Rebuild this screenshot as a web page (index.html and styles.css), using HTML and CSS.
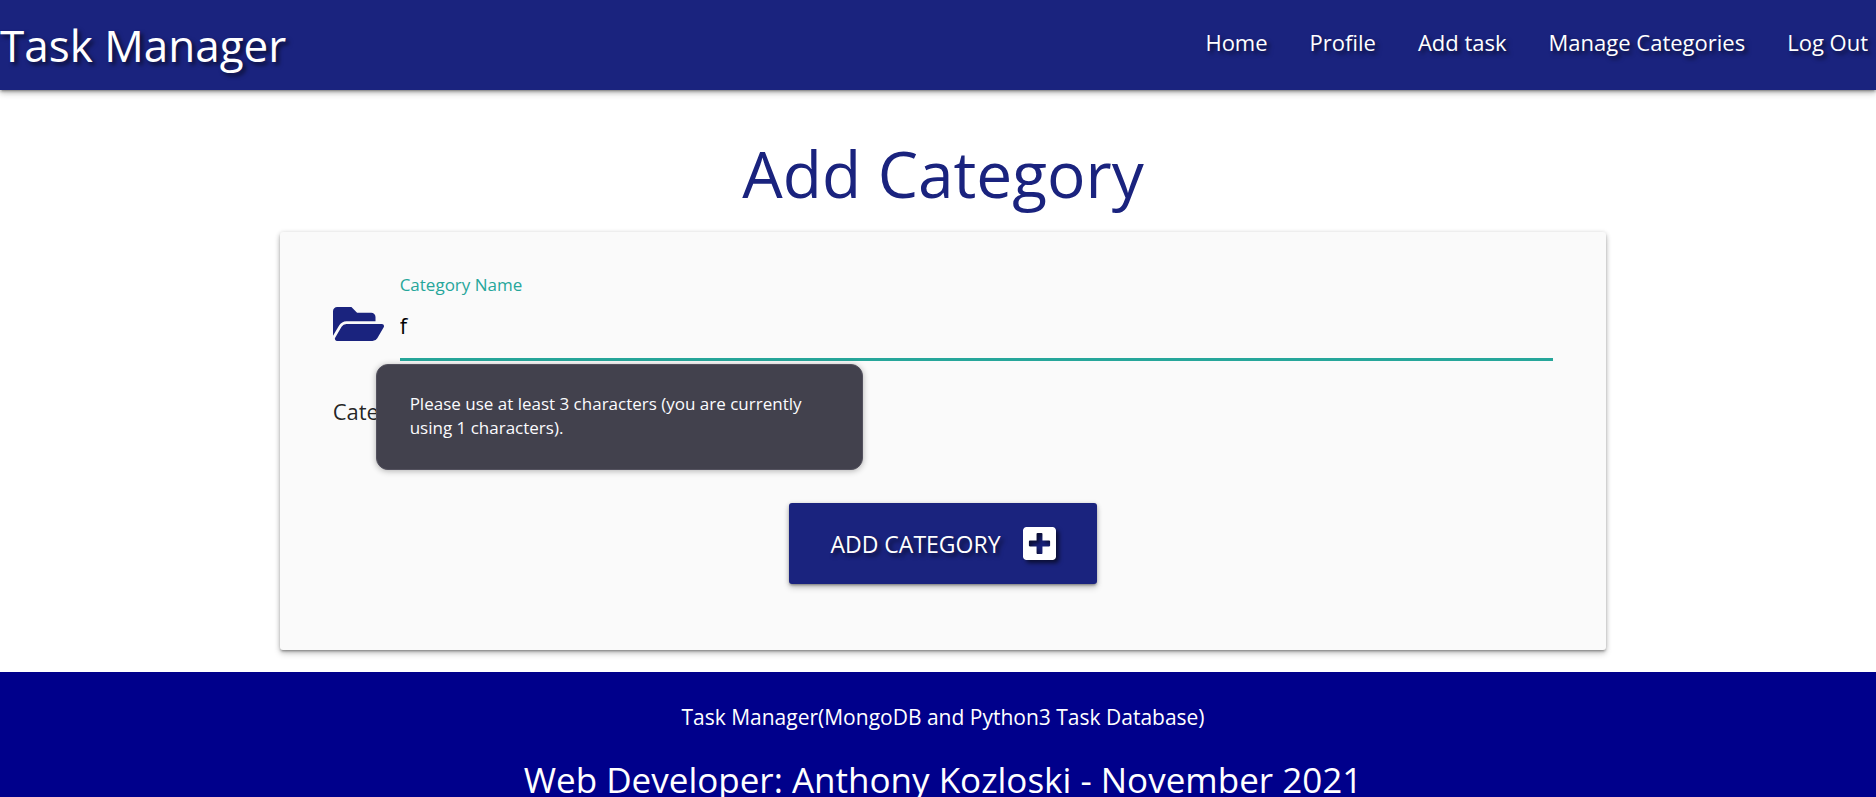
FILE: index.html
```
<!DOCTYPE html>
<html lang="en">
<head>
<meta charset="utf-8">
<title>Task Manager</title>
<link rel="stylesheet" href="styles.css">
</head>
<body>
<header class="navbar">
  <a class="brand" href="#">Task Manager</a>
  <nav class="nav-links">
    <a href="#">Home</a>
    <a href="#">Profile</a>
    <a href="#">Add task</a>
    <a href="#">Manage Categories</a>
    <a href="#">Log Out</a>
  </nav>
</header>
<main class="content">
  <h1 class="page-title">Add Category</h1>
  <form class="card">
    <div class="field">
      <svg class="folder-icon" viewBox="0 64 576 384" aria-hidden="true"><path fill="currentColor" d="M572.7 292.100L500.300 416.200A64 64 0 0 1 445 448H45c-18.500 0-30.100-20.100-20.700-36.100l72.400-124.100A64 64 0 0 1 152 256h400c18.500 0 30.100 20.100 20.700 36.100zM152 224h328v-48c0-26.500-21.500-48-48-48H272l-64-64H48C21.500 64 0 85.500 0 112v278l69.100-118.400C86.200 242.200 118 224 152 224z"/></svg>
      <div class="field-body">
        <label class="field-label" for="category-name">Category Name</label>
        <input class="field-input" id="category-name" type="text" value="f" minlength="3">
        <div class="tooltip" role="alert">Please use at least 3 characters (you are currently using 1 characters).</div>
      </div>
    </div>
    <p class="helper">Category</p>
    <button class="submit" type="button">
      <span>Add Category</span>
      <svg class="plus-icon" viewBox="0 32 448 448" aria-hidden="true"><path fill="currentColor" d="M400 32H48C21.500 32 0 53.500 0 80v352c0 26.500 21.500 48 48 48h352c26.500 0 48-21.500 48-48V80c0-26.500-21.500-48-48-48zm-32 252c0 6.600-5.400 12-12 12h-92v92c0 6.600-5.400 12-12 12h-56c-6.600 0-12-5.400-12-12v-92H92c-6.600 0-12-5.400-12-12v-56c0-6.600 5.400-12 12-12h92v-92c0-6.600 5.400-12 12-12h56c6.600 0 12 5.400 12 12v92h92c6.600 0 12 5.400 12 12v56z"/></svg>
    </button>
  </form>
</main>
<footer class="footer">
  <p class="footer-text">Task Manager(MongoDB and Python3 Task Database)</p>
  <p class="footer-credit">Web Developer: Anthony Kozloski - November 2021</p>
</footer>
</body>
</html>
```
FILE: styles.css
```
* {
  box-sizing: border-box;
}

body {
  display: flex;
  flex-direction: column;
  height: 100vh;
  margin: 0;
  overflow: hidden;
  background: #fff;
  color: rgba(0, 0, 0, 0.87);
  font-family: "Segoe UI", "Open Sans", "Noto Sans", sans-serif;
  font-size: 22px;
  line-height: 32px;
}

h1,
p {
  margin: 0;
  font-weight: 400;
}

a {
  color: inherit;
  text-decoration: none;
}

.navbar,
.card,
.submit {
  box-shadow: 0 2px 2px 0 rgba(0, 0, 0, 0.14), 0 3px 1px -2px rgba(0, 0, 0, 0.12), 0 1px 5px 0 rgba(0, 0, 0, 0.2), 0 4px 6px 0 rgba(0, 0, 0, 0.16);
}

.navbar {
  display: flex;
  flex: none;
  justify-content: space-between;
  height: 90px;
  padding-right: 8px;
  background: #1a237e;
  color: #fff;
  text-shadow: 3px 3px 4px rgba(0, 0, 0, 0.6);
}

.brand {
  font-size: 44px;
  line-height: 90px;
}

.nav-links {
  display: flex;
  gap: 42px;
  line-height: 84px;
}

.content {
  flex: none;
  padding: 40px 0 22px 10px;
}

.page-title {
  color: #1a237e;
  font-size: 64px;
  line-height: 88px;
  text-align: center;
  margin-bottom: 14px;
}

.card {
  display: flex;
  flex-direction: column;
  width: 71.1%;
  min-height: 418px;
  margin: 0 auto;
  padding: 37px 53px;
  border-radius: 3px;
  background: #fafafa;
}

.field {
  display: flex;
  gap: 16px;
}

.folder-icon {
  flex: none;
  width: 51px;
  height: 34px;
  margin-top: 38px;
  color: #1a237e;
}

.field-body {
  position: relative;
  display: flex;
  flex: 1;
  flex-direction: column;
}

.field-label {
  color: #26a69a;
  font-size: 17px;
  line-height: 32px;
}

.field-input {
  width: 100%;
  height: 60px;
  padding: 0 0 10px;
  border: 0;
  border-bottom: 3px solid #26a69a;
  outline: 0;
  background: transparent;
  color: #000;
  font: inherit;
}

.tooltip {
  position: absolute;
  top: 95px;
  left: -24px;
  width: 487px;
  padding: 27px 50px 29px 33px;
  border: 1px solid #53515e;
  border-radius: 12px;
  background: #42414d;
  box-shadow: 0 1px 6px rgba(0, 0, 0, 0.3);
  color: #fbfbfe;
  font-size: 17px;
  line-height: 24px;
}

.helper {
  margin: 34px 0 76px;
}

.submit {
  display: flex;
  align-items: center;
  align-self: center;
  gap: 22px;
  height: 81px;
  padding: 0 41px;
  border: 0;
  border-radius: 3px;
  background: #1a237e;
  color: #fff;
  font: inherit;
  font-size: 23px;
  text-shadow: 3px 3px 4px rgba(0, 0, 0, 0.6);
  text-transform: uppercase;
}

.plus-icon {
  width: 33px;
  height: 33px;
  filter: drop-shadow(3px 3px 2px rgba(0, 0, 0, 0.6));
}

.footer {
  flex: 1;
  padding: 29px 0 0 10px;
  background: #00008b;
  color: #fff;
  text-align: center;
}

.footer-text {
  font-size: 21px;
}

.footer-credit {
  margin-top: 20px;
  font-size: 35px;
  line-height: 54px;
}
```
